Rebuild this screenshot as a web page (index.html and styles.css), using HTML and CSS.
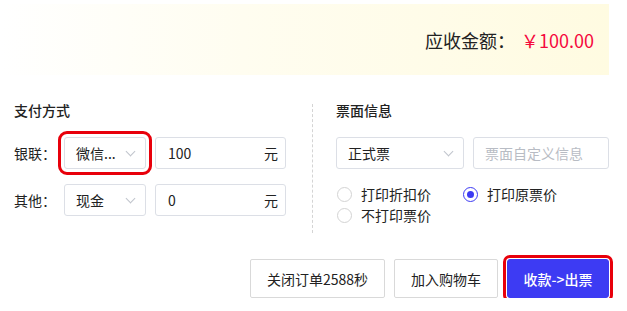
FILE: index.html
```html
<!DOCTYPE html>
<html lang="zh-CN">
<head>
    <meta charset="UTF-8">
    <title>收款</title>
    <link rel="stylesheet" href="styles.css">
</head>
<body>
    <div class="amount-bar">
        <span class="amount-label">应收金额：</span>
        <span class="amount-value">￥100.00</span>
    </div>

    <div class="pay-panel">
        <div class="pay-col">
            <h3>支付方式</h3>
            <div class="form-row">
                <span class="row-label">银联：</span>
                <div class="select marked">
                    <span>微信...</span>
                    <i class="chevron"></i>
                </div>
                <div class="amount-input">
                    <span>100</span>
                    <span class="unit">元</span>
                </div>
            </div>
            <div class="form-row">
                <span class="row-label">其他：</span>
                <div class="select">
                    <span>现金</span>
                    <i class="chevron"></i>
                </div>
                <div class="amount-input">
                    <span>0</span>
                    <span class="unit">元</span>
                </div>
            </div>
        </div>

        <div class="divider"></div>

        <div class="ticket-col">
            <h3>票面信息</h3>
            <div class="form-row">
                <div class="select wide">
                    <span>正式票</span>
                    <i class="chevron"></i>
                </div>
                <div class="text-input">票面自定义信息</div>
            </div>
            <div class="radio-group">
                <label class="radio"><span class="dot"></span>打印折扣价</label>
                <label class="radio checked"><span class="dot"></span>打印原票价</label>
                <label class="radio"><span class="dot"></span>不打印票价</label>
            </div>
        </div>
    </div>

    <div class="actions">
        <button class="btn">关闭订单2588秒</button>
        <button class="btn">加入购物车</button>
        <button class="btn primary marked">收款-&gt;出票</button>
    </div>
</body>
</html>
```

FILE: styles.css
```css
:root {
    --primary-color: #3d3bf3;
    --price-color: #f5093d;
    --text-color: #222;
    --border-color: #dcdfe6;
    --mark-color: #e8000b;
}

* {
    margin: 0;
    padding: 0;
    box-sizing: border-box;
}

body {
    font-family: "Noto Sans CJK SC", "Noto Sans", sans-serif;
    color: var(--text-color);
    background: #fff;
    font-size: 14px;
    width: 627px;
}

.amount-bar {
    margin: 4px 18px 0 0;
    height: 71px;
    display: flex;
    align-items: center;
    justify-content: flex-end;
    padding-right: 15px;
    background: linear-gradient(90deg, #ffffff 0%, #fffdf0 40%, #fffbe1 100%);
    font-size: 18px;
}

.amount-value {
    color: var(--price-color);
    margin-left: 6px;
}

.pay-panel {
    display: flex;
    padding: 25px 18px 0 14px;
}

h3 {
    font-size: 14px;
    font-weight: 500;
    line-height: 20px;
    margin-bottom: 17px;
}

.pay-col {
    width: 272px;
}

.divider {
    width: 0;
    height: 129px;
    border-left: 1px dashed #d4d4d4;
    margin: 4px 23px 0 26px;
}

.ticket-col {
    width: 273px;
}

.form-row {
    display: flex;
    align-items: center;
    margin-bottom: 15px;
}

.row-label {
    width: 50px;
}

.select {
    width: 82px;
    height: 32px;
    border: 1px solid var(--border-color);
    border-radius: 3px;
    display: flex;
    align-items: center;
    justify-content: space-between;
    padding: 0 11px 0 11px;
    margin-right: 9px;
}

.select.wide {
    width: 128px;
}

.select.marked {
    outline: 3px solid var(--mark-color);
    outline-offset: 3px;
}

.chevron {
    width: 7px;
    height: 7px;
    border-right: 1px solid #c0c4cc;
    border-bottom: 1px solid #c0c4cc;
    transform: rotate(45deg);
    margin-top: -4px;
}

.amount-input {
    width: 131px;
    height: 32px;
    border: 1px solid var(--border-color);
    border-radius: 3px;
    display: flex;
    align-items: center;
    justify-content: space-between;
    padding: 0 7px 0 12px;
}

.text-input {
    width: 136px;
    height: 32px;
    border: 1px solid var(--border-color);
    border-radius: 3px;
    display: flex;
    align-items: center;
    padding: 0 11px;
    color: #b8bcc4;
}

.radio-group {
    display: flex;
    flex-wrap: wrap;
    width: 273px;
    margin-top: 3px;
}

.radio {
    display: flex;
    align-items: center;
    line-height: 21px;
    width: 126px;
}

.dot {
    width: 15px;
    height: 15px;
    border: 1px solid #d3d3d3;
    border-radius: 50%;
    margin: 0 9px 0 1px;
    position: relative;
}

.radio.checked .dot {
    border-color: var(--primary-color);
}

.radio.checked .dot::after {
    content: "";
    position: absolute;
    left: 3px;
    top: 3px;
    width: 7px;
    height: 7px;
    border-radius: 50%;
    background: var(--primary-color);
}

.actions {
    display: flex;
    justify-content: flex-end;
    gap: 9px;
    padding: 26px 18px 0 0;
}

.btn {
    font-family: inherit;
    font-size: 14px;
    color: var(--text-color);
    height: 39px;
    padding: 0 16px;
    white-space: nowrap;
    background: #fff;
    border: 1px solid #d9d9d9;
    border-radius: 2px;
}

.btn.primary {
    width: 102px;
    padding: 0;
    background: var(--primary-color);
    border-color: var(--primary-color);
    color: #fff;
    font-weight: 500;
}

.btn.marked {
    outline: 3px solid var(--mark-color);
    outline-offset: 1px;
    border-radius: 3px;
}
```
